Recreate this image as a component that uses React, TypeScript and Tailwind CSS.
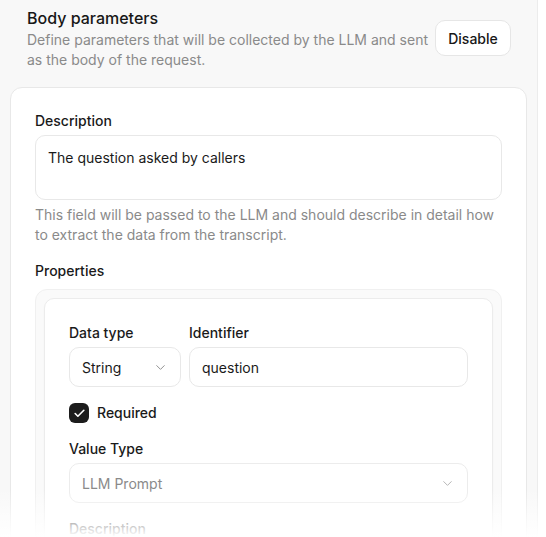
import React from "react";
import { ChevronDown, Check } from "lucide-react";

function Label({ children }: { children: React.ReactNode }) {
  return <div className="text-[14px] leading-5 font-medium text-[#1a1a1a]">{children}</div>;
}

export default function App() {
  return (
    <div className="relative h-[537px] w-[546px] overflow-hidden bg-white font-[family-name:Inter,sans-serif]">
      <div className="h-full w-[538px] border-r border-[#ececec] bg-[#f8f8f8]">
        <div className="flex items-start justify-between pl-[27px] pr-[26px] pt-[6px]">
          <div className="w-[404px]">
            <div className="text-[16px] leading-6 font-medium text-[#171717]">Body parameters</div>
            <div className="text-[14px] leading-5 text-[#8a8a8a]">
              Define parameters that will be collected by the LLM and sent as the body of the request.
            </div>
          </div>
          <button className="mt-[14px] h-9 w-[76px] rounded-[10px] border border-[#e6e6e6] bg-white text-[14px] font-medium text-[#171717]">
            Disable
          </button>
        </div>

        <div className="mx-[10px] mt-[17px] rounded-xl border border-[#e8e8e8] bg-white px-6 pt-[23px] pb-10">
          <Label>Description</Label>
          <div className="mt-1 h-[65px] rounded-[10px] border border-[#e8e8e8] px-3 pt-3 text-[14px] leading-5 text-[#1a1a1a]">
            The question asked by callers
          </div>
          <div className="mt-[5px] text-[14px] leading-5 text-[#8a8a8a]">
            This field will be passed to the LLM and should describe in detail how to extract the data from the transcript.
          </div>
          <div className="mt-4">
            <Label>Properties</Label>
          </div>
          <div className="mt-2 rounded-xl border border-[#f0f0f0] bg-[#fafafa] p-2">
            <div className="rounded-[10px] border border-[#ececec] bg-white px-6 pt-6 pb-10 shadow-[0_1px_2px_rgba(0,0,0,0.03)]">
              <div className="flex gap-2">
                <div className="w-[112px]">
                  <Label>Data type</Label>
                  <div className="mt-1 flex h-10 items-center justify-between rounded-[10px] border border-[#e8e8e8] px-3 text-[14px] text-[#1a1a1a]">
                    <span>String</span>
                    <ChevronDown size={15} strokeWidth={1.5} className="text-[#8a8a8a]" />
                  </div>
                </div>
                <div className="flex-1">
                  <Label>Identifier</Label>
                  <div className="mt-1 flex h-10 items-center rounded-[10px] border border-[#e8e8e8] px-3 text-[14px] text-[#1a1a1a]">
                    question
                  </div>
                </div>
              </div>
              <div className="mt-4 flex h-5 items-center gap-2">
                <div className="flex h-5 w-5 items-center justify-center rounded-[6px] bg-[#1c1c1c]">
                  <Check size={13} strokeWidth={3} className="text-white" />
                </div>
                <span className="text-[14px] leading-5 font-medium text-[#1a1a1a]">Required</span>
              </div>
              <div className="mt-4">
                <Label>Value Type</Label>
              </div>
              <div className="mt-1 flex h-10 items-center justify-between rounded-[10px] border border-[#ececec] px-3 text-[14px] text-[#8a8a8a]">
                <span>LLM Prompt</span>
                <ChevronDown size={15} strokeWidth={1.5} className="text-[#b0b0b0]" />
              </div>
              <div className="mt-4">
                <Label>Description</Label>
              </div>
            </div>
          </div>
        </div>
      </div>
      <div className="pointer-events-none absolute bottom-0 left-0 right-0 h-[48px] bg-linear-to-b from-white/0 to-white" />
    </div>
  );
}
